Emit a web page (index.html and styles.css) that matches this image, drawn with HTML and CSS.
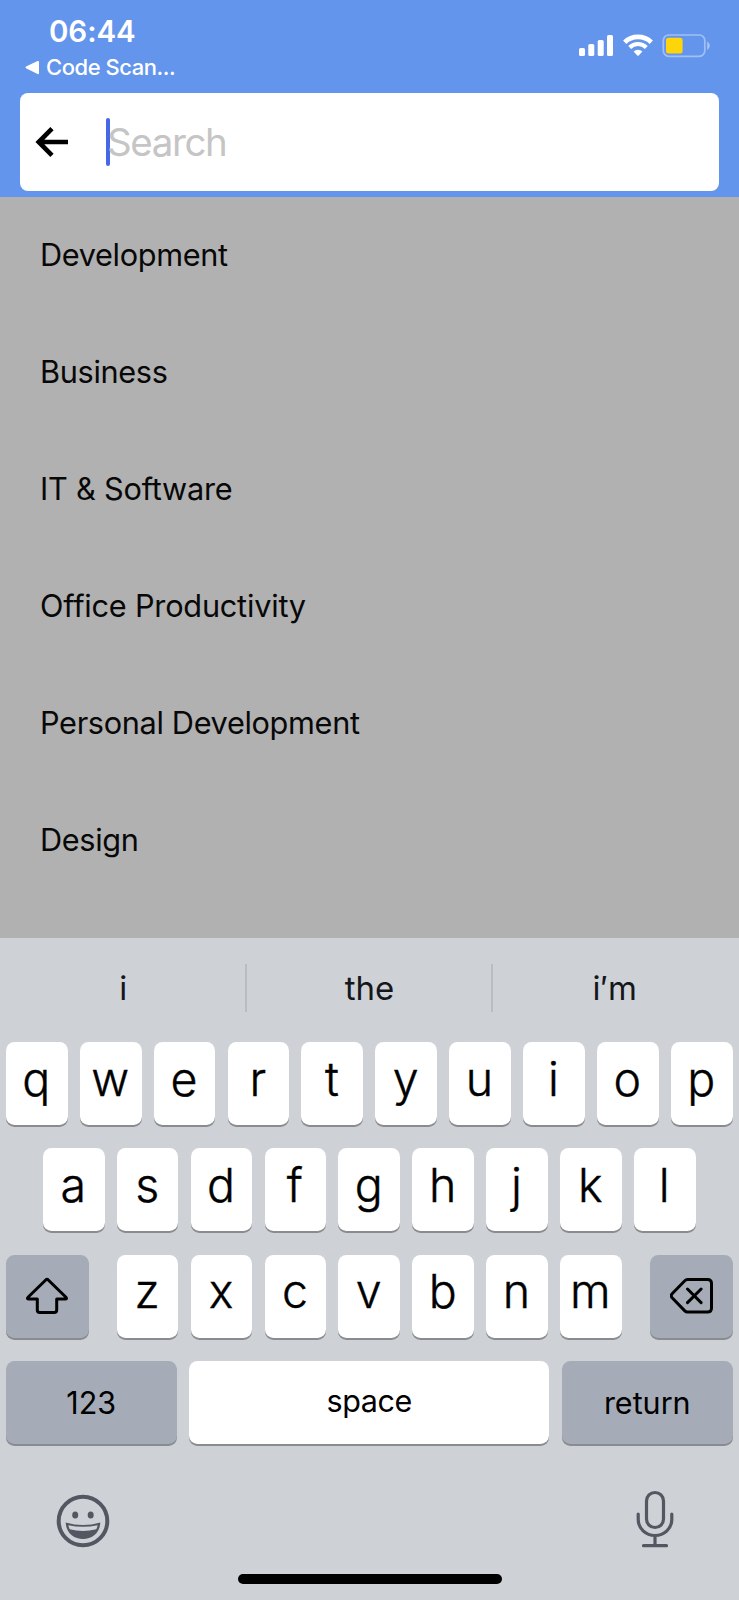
FILE: index.html
```
<!DOCTYPE html>
<html lang="en">
<head>
<meta charset="utf-8">
<title>Search</title>
<link rel="stylesheet" href="styles.css">
</head>
<body>
<div class="screen">
  <header class="header">
    <div class="status">
      <div class="status-left">
        <div class="time">06:44</div>
        <div class="back-app">
          <svg class="back-tri" width="15" height="15" viewBox="0 0 15 15"><path d="M1 6.600 12.600 1q1.400-.5 1.400 1v11q0 1.500-1.400 1L1 8.200q-1-.8 0-1.600z" fill="#fff"/></svg>
          <span>Code Scan...</span>
        </div>
      </div>
      <svg class="status-icons" width="134" height="24" viewBox="0 0 134 24">
        <g fill="#fff">
          <rect x="1" y="14" width="6" height="8" rx="1.600"/>
          <rect x="10.300" y="10" width="6" height="12" rx="1.600"/>
          <rect x="19.700" y="6" width="6" height="16" rx="1.600"/>
          <rect x="29" y="1" width="6" height="21" rx="1.600"/>
        </g>
        <path d="M46.700 8.200a19.500 19.500 0 0 1 26.600 0" fill="none" stroke="#fff" stroke-width="4.700"/>
        <path d="M51.700 13.400a12 12 0 0 1 16.600 0" fill="none" stroke="#fff" stroke-width="4.100"/>
        <path d="M55.600 17.500a6.500 6.500 0 0 1 8.800 0L60.700 21.500q-.7.600-1.400 0z" fill="#fff"/>
        <rect x="85.300" y="1" width="41.500" height="21.300" rx="5.500" fill="none" stroke="#fff" stroke-opacity=".4" stroke-width="1.700"/>
        <rect x="88" y="3.800" width="16.600" height="15.600" rx="2.500" fill="#fed50a"/>
        <path d="M129.200 7.500q2.600 1.500 2.600 4.200t-2.600 4.200z" fill="#fff" fill-opacity=".45"/>
      </svg>
    </div>
    <div class="search">
      <svg class="arrow" width="34" height="32" viewBox="0 0 34 32"><path d="M17 2.700 3.700 16 17 29.300M4.500 16H33" fill="none" stroke="#000" stroke-width="4.600"/></svg>
      <span class="caret"></span>
      <span class="placeholder">Search</span>
    </div>
  </header>
  <ul class="list">
    <li>Development</li>
    <li>Business</li>
    <li class="wide">IT &amp; Software</li>
    <li class="wide">Office Productivity</li>
    <li>Personal Development</li>
    <li>Design</li>
  </ul>
  <section class="keyboard">
    <div class="suggestions"><span>i</span><span>the</span><span>i<i class="apostrophe">′</i>m</span></div>
    <div class="row"><b>q</b><b>w</b><b>e</b><b>r</b><b>t</b><b>y</b><b>u</b><b>i</b><b>o</b><b>p</b></div>
    <div class="row"><b>a</b><b>s</b><b>d</b><b>f</b><b>g</b><b>h</b><b>j</b><b>k</b><b>l</b></div>
    <div class="row row-shift">
      <div class="key-fn"><svg class="shift" width="44" height="38" viewBox="0 0 44 38"><path d="M21 2.700q1-.9 2 0L41 20.300q1.300 1.700-.8 1.700H31.700v11q0 2.500-2.500 2.500h-14.400q-2.500 0-2.500-2.500V22H3.800q-2.100 0-.8-1.700z" fill="none" stroke="#000" stroke-width="3" stroke-linejoin="round"/></svg></div>
      <div class="letters"><b>z</b><b>x</b><b>c</b><b>v</b><b>b</b><b>n</b><b>m</b></div>
      <div class="key-fn"><svg width="44" height="38" viewBox="0 0 44 38"><path d="M17.500 2.500h20q4 0 4 4v24.500q0 4-4 4h-20q-1.600 0-2.700-1.100L2.100 20.700q-1.800-2 0-4L14.800 3.700Q15.900 2.500 17.500 2.500zM17.500 12l13.600 13.600M31.100 12l-13.600 13.600" fill="none" stroke="#000" stroke-width="3" stroke-linecap="round" stroke-linejoin="round"/></svg></div>
    </div>
    <div class="row row-space"><div class="key-fn">123</div><div class="space">space</div><div class="key-fn">return</div></div>
    <div class="tools">
      <svg class="emoji" width="54" height="54" viewBox="0 0 54 54">
        <circle cx="27" cy="27" r="24.300" fill="none" stroke="#525761" stroke-width="4"/>
        <ellipse cx="19.200" cy="21" rx="3" ry="3.500" fill="#525761"/><ellipse cx="34.700" cy="21" rx="3" ry="3.500" fill="#525761"/>
        <path d="M9.700 28.500Q27 33.500 44.300 28.500C43.500 50.500 10.500 50.500 9.700 28.500z" fill="#525761"/>
        <path d="M12.400 31.200Q27 34.500 41.600 31.200q-.3 2.200-1.300 4Q27 38.800 13.700 35.200q-1-1.800-1.300-4z" fill="#d0d3d9"/>
      </svg>
      <svg width="38" height="58" viewBox="0 0 38 58"><g fill="none" stroke="#525761" stroke-width="3.200" stroke-linecap="round"><rect x="10.500" y="2.500" width="17" height="35" rx="8.500"/><path d="M2.200 24v5.500a16.800 16 0 0 0 33.600 0V24M19 46v9.500M7.500 55.700h23"/></g></svg>
    </div>
    <div class="home"></div>
  </section>
</div>
</body>
</html>
```
FILE: styles.css
```
* { box-sizing: border-box; }
body { margin: 0; font-family: Inter, "Liberation Sans", sans-serif; color: #000; }
.screen { width: 739px; height: 1600px; display: flex; flex-direction: column; background: #b1b1b1; overflow: hidden; }
svg { display: block; flex: none; }

.header { height: 197px; flex: none; background: #6495ec; padding: 0 20px; }
.status { height: 93px; display: flex; justify-content: space-between; color: #fff; }
.status-left { padding-top: 14px; }
.time { font-size: 29.500px; font-weight: 600; line-height: 34px; padding-left: 29px; letter-spacing: -0.100px; }
.back-app { display: flex; align-items: center; gap: 6px; padding-left: 5px; font-size: 22px; font-weight: 500; line-height: 28px; margin-top: 5px; letter-spacing: -0.450px; white-space: nowrap; }
.status-icons { margin: 34px 7px 0 0; }
.search { height: 98px; border-radius: 8px; background: #fff; display: flex; align-items: center; padding-left: 15px; }
.caret { width: 4px; height: 48px; border-radius: 2px; background: #4468e8; margin-left: 37px; }
.placeholder { font-size: 38.500px; color: #c5c5c5; letter-spacing: -1.400px; margin-left: -3px; }

.list { list-style: none; margin: 0; padding: 0 40px; height: 741px; flex: none; }
.list li { height: 117px; display: flex; align-items: center; padding-bottom: 2px; font-size: 30.700px; letter-spacing: -0.340px; color: #080808; }
.list .wide { letter-spacing: -0.220px; }

.keyboard { flex: 1; background: #ced2d7; display: flex; flex-direction: column; padding: 0 6px; }
.suggestions { height: 104px; flex: none; display: grid; grid-template-columns: 244.500px 246px 1fr; align-items: center; margin: 0 -6px; padding-bottom: 4px; font-size: 33px; color: #15171b; }
.suggestions span { height: 48px; line-height: 48px; text-align: center; padding-left: 2px; }
.suggestions span + span { border-left: 2px solid #b9bcc2; }
.suggestions span:last-child { padding: 0 2px 0 0; }
.apostrophe { font-style: normal; }
.row { height: 83px; margin-bottom: 23.400px; flex: none; display: flex; justify-content: center; gap: 12.200px; margin-left: -.5px; }
.row b, .space, .key-fn { border-radius: 8.500px; box-shadow: 0 2px 0 #898b8f; background: #fff; display: flex; align-items: center; justify-content: center; }
.row b { width: 61.700px; font-size: 46.500px; font-weight: 300; -webkit-text-stroke: 0.400px #000; line-height: 60px; padding: 0 1px 10px 0; }
.row .key-fn { background: #a6acb7; width: 83px; font-size: 30.500px; }
.row-shift { justify-content: space-between; }
.letters { display: flex; gap: 12.200px; }
.row-space .key-fn { width: 171.500px; }
.space { flex: 1; font-size: 30.500px; padding-bottom: 4px; letter-spacing: -0.400px; }
.shift { margin-right: 1px; }
.emoji { margin-top: 4px; }
.tools { display: flex; justify-content: space-between; align-items: center; height: 58px; margin: 22.500px 59px 0 50px; }
.home { width: 264px; height: 10px; border-radius: 5px; background: #000; margin: 26px auto 0; }
```
